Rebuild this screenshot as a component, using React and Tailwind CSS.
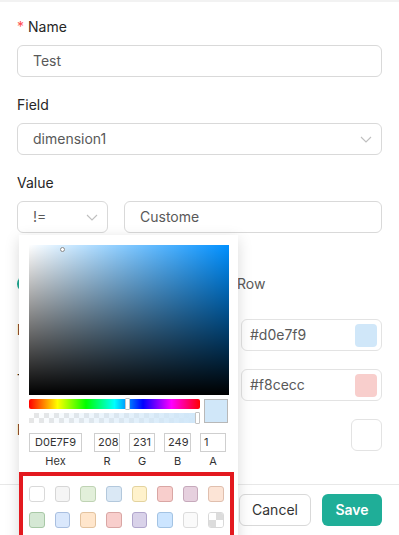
import React from 'react';

const Chevron = ({ className = "" }) => (
    <svg className={className} width="12" height="7" viewBox="0 0 12 7" fill="none">
        <path d="M1 1l5 5 5-5" stroke="#bfbfbf" strokeWidth="1.1" />
    </svg>
);

const presetRows = [
    [
        ["#ffffff", "#d9d9d9"], ["#f5f5f5", "#d6d6d6"], ["#e2efda", "#bfd3b4"], ["#dae8f5", "#b3c8dc"],
        ["#fff2cc", "#e3d39f"], ["#f8cecc", "#d9a6a4"], ["#e6d0de", "#c6a9bb"], ["#fce4d6", "#e0bfae"],
    ],
    [
        ["#d5e8d4", "#a8c8a6"], ["#dae8fc", "#a9bfe0"], ["#ffe6cc", "#e3c39f"], ["#f8cecc", "#d9a6a4"],
        ["#d9d2e9", "#b1a6cc"], ["#cce5ff", "#a3c3e3"], ["#fafafa", "#dcdcdc"], [null, "#d9d9d9"],
    ],
];

const ColorPicker = () => (
    <div className="absolute left-[19px] top-[233px] w-[219px] h-[320px] bg-white shadow-[0_4px_14px_rgba(0,0,0,0.15)]">
        <div className="px-[10px] pt-[10px]">
            {/* saturation area */}
            <div className="relative h-[150px] w-[200px] bg-[#0090ff]">
                <div className="absolute inset-0 bg-[linear-gradient(to_right,#fff,rgba(255,255,255,0))]" />
                <div className="absolute inset-0 bg-[linear-gradient(to_bottom,rgba(0,0,0,0),#000)]" />
                <div className="absolute left-[31px] top-[2px] h-[5px] w-[5px] rounded-full border border-[#8a8a8a] bg-white" />
            </div>

            {/* sliders + preview */}
            <div className="mt-[4px] flex gap-[4px]">
                <div className="flex w-[172px] flex-col gap-[4px]">
                    <div className="relative h-[10px] rounded-[2px] bg-[linear-gradient(to_right,#f00,#ff0,#0f0,#0ff,#00f,#f0f,#f00)]">
                        <div className="absolute left-[96px] top-[-1px] h-[12px] w-[5px] rounded-[1px] border border-[#c4c4c4] bg-white" />
                    </div>
                    <div className="relative h-[10px] bg-[repeating-conic-gradient(#e6e6e6_0%_25%,#fff_0%_50%)] bg-[length:10px_10px]">
                        <div className="absolute inset-0 bg-[linear-gradient(to_right,rgba(208,231,249,0),#d0e7f9)]" />
                        <div className="absolute left-[166px] top-[-1px] h-[12px] w-[5px] rounded-[1px] border border-[#c4c4c4] bg-white" />
                    </div>
                </div>
                <div className="h-[24px] w-[24px] border border-[#b8b8b8] bg-[#d0e7f9]" />
            </div>

            {/* inputs */}
            <div className="mt-[10px] flex text-[11px] text-[#333]">
                <div className="flex w-[53px] flex-col items-center">
                    <div className="h-[19px] w-full border border-[#cfcfcf] pl-[5px] leading-[17px]">D0E7F9</div>
                    <span className="mt-[1px] leading-[16px]">Hex</span>
                </div>
                <div className="ml-[12px] flex w-[26px] flex-col items-center">
                    <div className="h-[19px] w-full border border-[#cfcfcf] pl-[3px] leading-[17px]">208</div>
                    <span className="mt-[1px] leading-[16px]">R</span>
                </div>
                <div className="ml-[9px] flex w-[26px] flex-col items-center">
                    <div className="h-[19px] w-full border border-[#cfcfcf] pl-[3px] leading-[17px]">231</div>
                    <span className="mt-[1px] leading-[16px]">G</span>
                </div>
                <div className="ml-[9px] flex w-[27px] flex-col items-center">
                    <div className="h-[19px] w-full border border-[#cfcfcf] pl-[3px] leading-[17px]">249</div>
                    <span className="mt-[1px] leading-[16px]">B</span>
                </div>
                <div className="ml-[9px] flex w-[26px] flex-col items-center">
                    <div className="h-[19px] w-full border border-[#cfcfcf] pl-[3px] leading-[17px]">1</div>
                    <span className="mt-[1px] leading-[16px]">A</span>
                </div>
            </div>
        </div>

        {/* preset swatches */}
        <div className="mt-[3px] w-[215px] border-4 border-[#e3191f] px-[6px] pt-[10px] pb-[8px]">
            {presetRows.map((row, r) => (
                <div key={r} className={`flex gap-[10px] ${r === 1 ? "mt-[10px]" : ""}`}>
                    {row.map(([fill, edge], i) => (
                        <div
                            key={i}
                            className="h-[16px] w-[16px] overflow-hidden rounded-[3px] border"
                            style={{ backgroundColor: fill || "#fff", borderColor: edge }}
                        >
                            {!fill && (
                                <div className="h-full w-full bg-[repeating-conic-gradient(#dcdcdc_0%_25%,#fff_0%_50%)] bg-[length:14px_14px]" />
                            )}
                        </div>
                    ))}
                </div>
            ))}
        </div>
    </div>
);

const App = () => {
    return (
        <div className="relative h-[535px] w-[399px] overflow-hidden border-t-2 border-[#f2f2f2] bg-white font-['Inter',sans-serif] text-sm text-[#262626]">
            <div className="px-[17px] pt-[14px]">
                {/* Name */}
                <div className="h-[22px] leading-[22px]">
                    <span className="mr-[4px] text-[#ff4d4f]">*</span>Name
                </div>
                <div className="mt-[7px] flex h-8 items-center rounded-md border border-[#d9d9d9] px-[15px] text-[#595959]">Test</div>

                {/* Field */}
                <div className="mt-[17px] h-[22px] leading-[22px]">Field</div>
                <div className="mt-[7px] flex h-8 items-center justify-between rounded-md border border-[#d9d9d9] pl-[15px] pr-[9px] text-[#595959]">
                    <span>dimension1</span>
                    <Chevron />
                </div>

                {/* Value */}
                <div className="mt-[17px] h-[22px] leading-[22px]">Value</div>
                <div className="mt-[7px] flex gap-[16px]">
                    <div className="flex h-8 w-[91px] items-center justify-between rounded-md border border-[#d9d9d9] pl-[15px] pr-[9px] text-[#595959]">
                        <span>!=</span>
                        <Chevron />
                    </div>
                    <div className="flex h-8 flex-1 items-center rounded-md border border-[#d9d9d9] px-[15px] text-[#595959]">Custome</div>
                </div>

                {/* Mode radios */}
                <div className="mt-[40px] flex h-[22px] items-center text-[#595959]">
                    <div className="flex w-[196px] items-center gap-[8px]">
                        <span className="flex h-[16px] w-[16px] items-center justify-center rounded-full bg-[#1fa993]">
                            <span className="h-[6px] w-[6px] rounded-full bg-white" />
                        </span>
                        <span>Column</span>
                    </div>
                    <div className="flex items-center gap-[8px]">
                        <span className="h-[16px] w-[16px] rounded-full border border-[#d9d9d9]" />
                        <span>Row</span>
                    </div>
                </div>

                {/* Colour rows */}
                <div className="mt-[24px] flex items-start justify-between">
                    <span className="leading-[22px]">Background</span>
                    <div className="flex h-8 w-[141px] items-center justify-between rounded-md border border-[#e3e3e3] pl-[8px] pr-[4px] text-[#595959]">
                        <span>#d0e7f9</span>
                        <span className="h-[23px] w-[22px] rounded-[4px] bg-[#d0e7f9]" />
                    </div>
                </div>
                <div className="mt-[18px] flex items-start justify-between">
                    <span className="leading-[22px]">Text color</span>
                    <div className="flex h-8 w-[141px] items-center justify-between rounded-md border border-[#e3e3e3] pl-[8px] pr-[4px] text-[#595959]">
                        <span>#f8cecc</span>
                        <span className="h-[23px] w-[22px] rounded-[4px] bg-[#f8cecc]" />
                    </div>
                </div>
                <div className="mt-[18px] flex items-start justify-between">
                    <span className="leading-[22px]">Border</span>
                    <div className="h-8 w-[31px] rounded-md border border-[#e3e3e3] bg-white" />
                </div>
            </div>

            {/* Footer */}
            <div className="mt-[33px] flex justify-end gap-[11px] border-t border-[#e8e8e8] px-[17px] pt-[9px]">
                <button className="h-8 w-[72px] rounded-md border border-[#d9d9d9] bg-white text-[#333]">Cancel</button>
                <button className="h-8 w-[60px] rounded-md bg-[#1fae98] font-semibold text-white">Save</button>
            </div>

            <ColorPicker />
        </div>
    );
};

export default App;
